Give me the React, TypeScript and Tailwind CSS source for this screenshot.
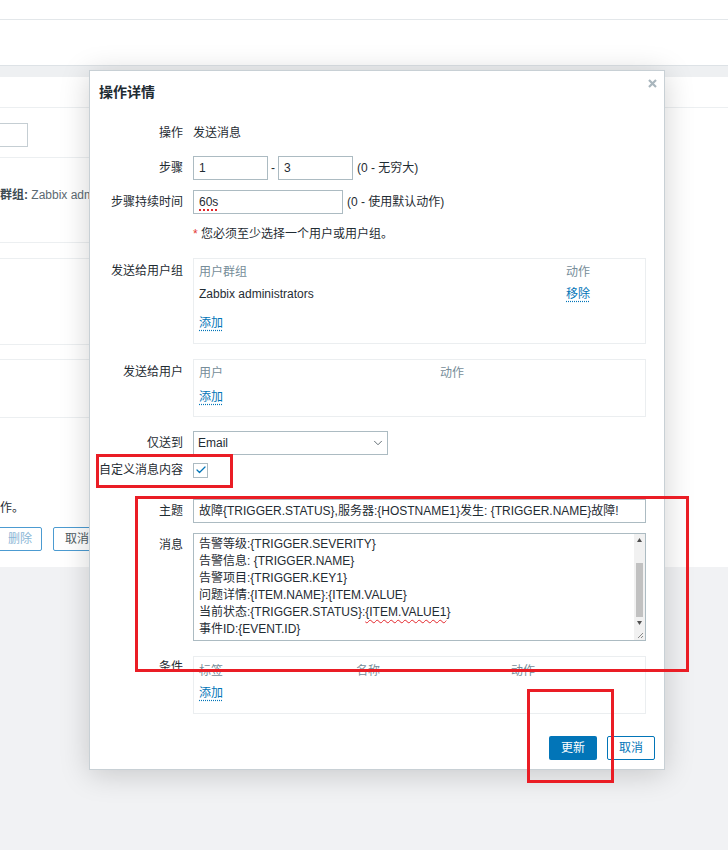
import React from "react";
import { Check, ChevronDown } from "lucide-react";

const font = "font-['Liberation_Sans','Noto_Sans_CJK_SC',sans-serif]";

const messageLines = [
	"告警等级:{TRIGGER.SEVERITY}",
	"告警信息: {TRIGGER.NAME}",
	"告警项目:{TRIGGER.KEY1}",
	"问题详情:{ITEM.NAME}:{ITEM.VALUE}",
	null,
	"事件ID:{EVENT.ID}",
];

const Label = ({ children, className = "" }: { children: React.ReactNode; className?: string }) => (
	<div className={`w-[84px] shrink-0 text-right leading-[24px] whitespace-nowrap ${className}`}>{children}</div>
);

const Link = ({ children }: { children: React.ReactNode }) => (
	<span className="text-[#0275b8] underline decoration-dotted decoration-[#0275b8] underline-offset-[3px]">
		{children}
	</span>
);

const Input = ({ className = "", children }: { className?: string; children?: React.ReactNode }) => (
	<div className={`h-[24px] border border-[#acbbc2] bg-white px-[5px] leading-[22px] whitespace-nowrap ${className}`}>
		{children}
	</div>
);

const Annotation = ({ className }: { className: string }) => (
	<div className={`pointer-events-none absolute border-[3px] border-[#ea1d25] ${className}`} />
);

const BackgroundPage = () => (
	<div className="bg-white">
		<div className="h-[20px] border-b border-[#e3e7ea]" />
		<div className="h-[45px]" />
		<div className="h-[12px] border-t border-[#dde2e6] bg-[#eef0f2]" />
		<div className="h-[31px] border-b border-[#eceff1]" />
		<div className="w-[640px]">
			<div className="h-[50px] border-b border-[#eceff1] pt-[15px]">
				<div className="-ml-[100px] h-[24px] w-[128px] border border-[#c5ced3]" />
			</div>
			<div className="h-[85px] border-b border-[#eceff1] pt-[30px] leading-[14px] whitespace-nowrap">
				<span className="font-bold text-[#3d4a51]">群组:</span>
				<span className="text-[#5c6a72]"> Zabbix administrators 通过 所有介质</span>
			</div>
			<div className="h-[16px] border-b border-[#eceff1]" />
			<div className="h-[86px] border-b border-[#eceff1]" />
			<div className="h-[15px] border-b border-[#eceff1]" />
			<div className="h-[58px] border-b border-[#eceff1]" />
			<div className="h-[149px] pt-[83px]">
				<div className="leading-[14px] text-[#1f2c33]">作。</div>
				<div className="mt-[12px] flex gap-[11px]">
					<div className="-ml-[12px] h-[24px] w-[54px] rounded-[2px] border border-[#4c9bd1] pl-[19px] leading-[22px] text-[#8ab6d6]">
						删除
					</div>
					<div className="h-[24px] w-[48px] rounded-[2px] border border-[#4c9bd1] text-center leading-[22px] text-[#4d5a61]">
						取消
					</div>
				</div>
			</div>
		</div>
	</div>
);

const Dialog = () => (
	<div className="absolute left-[89px] top-[70px] w-[576px] border border-[#c8d0d5] bg-white pb-[9px] pl-[9px] text-[#1f2c33] shadow-[0_4px_28px_rgba(0,0,0,0.18)]">
		<div className="pt-[13px] text-[14px] font-bold leading-[17px] text-[#1f2c33]">操作详情</div>
		<svg className="absolute right-[7px] top-[8px]" width="9" height="9" viewBox="0 0 9 9">
			<path d="M1 1 L8 8 M8 1 L1 8" stroke="#a9b6bd" strokeWidth="2.2" />
		</svg>

		<div className="mt-[20px] flex">
			<Label>操作</Label>
			<div className="ml-[10px] leading-[24px]">发送消息</div>
		</div>

		<div className="mt-[11px] flex">
			<Label>步骤</Label>
			<div className="ml-[10px] flex items-center">
				<Input className="w-[75px]">1</Input>
				<span className="mx-[3px]">-</span>
				<Input className="w-[75px]">3</Input>
				<span className="ml-[4px]">(0 - 无穷大)</span>
			</div>
		</div>

		<div className="mt-[10px] flex">
			<Label>步骤持续时间</Label>
			<div className="ml-[10px] flex items-center">
				<Input className="w-[150px] border-[#0275b8]">
					<span className="underline decoration-dotted decoration-[#e3262b] decoration-2 underline-offset-[3px]">60s</span>
				</Input>
				<span className="ml-[4px]">(0 - 使用默认动作)</span>
			</div>
		</div>

		<div className="mt-[13px] pl-[94px] leading-[14px]">
			<span className="text-[#e33734]">*</span> 您必须至少选择一个用户或用户组。
		</div>

		<div className="mt-[17px] flex">
			<Label className="pt-[1px]">发送给用户组</Label>
			<div className="ml-[10px] h-[86px] w-[453px] border border-[#ebeef0] pl-[5px] pt-[6px] leading-[14px]">
				<div className="flex text-[#768d99]">
					<div className="w-[367px]">用户群组</div>
					<div>动作</div>
				</div>
				<div className="mt-[8px] flex">
					<div className="w-[367px]">Zabbix administrators</div>
					<Link>移除</Link>
				</div>
				<div className="mt-[15px]">
					<Link>添加</Link>
				</div>
			</div>
		</div>

		<div className="mt-[15px] flex">
			<Label className="pt-[1px]">发送给用户</Label>
			<div className="ml-[10px] h-[58px] w-[453px] border border-[#ebeef0] pl-[5px] pt-[6px] leading-[14px]">
				<div className="flex text-[#768d99]">
					<div className="w-[241px]">用户</div>
					<div>动作</div>
				</div>
				<div className="mt-[10px]">
					<Link>添加</Link>
				</div>
			</div>
		</div>

		<div className="mt-[14px] flex">
			<Label>仅送到</Label>
			<div className="ml-[10px] flex h-[24px] w-[195px] items-center justify-between border border-[#acbbc2] pl-[4px] pr-[2px]">
				<span>Email</span>
				<ChevronDown size={14} strokeWidth={1.5} color="#4f5b62" />
			</div>
		</div>

		<div className="mt-[3px] flex">
			<Label>自定义消息内容</Label>
			<div className="ml-[10px] flex items-center">
				<div className="flex h-[15px] w-[15px] items-center justify-center border border-[#acbbc2]">
					<Check size={12} strokeWidth={2.5} color="#0275b8" />
				</div>
			</div>
		</div>

		<div className="mt-[17px] flex">
			<Label>主题</Label>
			<Input className="ml-[10px] w-[453px]">故障{"{TRIGGER.STATUS}"},服务器:{"{HOSTNAME1}"}发生: {"{TRIGGER.NAME}"}故障!</Input>
		</div>

		<div className="mt-[10px] flex">
			<Label>消息</Label>
			<div className="relative ml-[10px] h-[108px] w-[453px] overflow-hidden border border-[#acbbc2] pl-[5px] pt-[2px] leading-[17px]">
				{messageLines.map((line, i) =>
					line ? (
						<div key={i}>{line}</div>
					) : (
						<div key={i}>
							当前状态:{"{TRIGGER.STATUS}"}:
							<span className="underline decoration-wavy decoration-[#e3262b] decoration-1 underline-offset-[3px]">
								{"{ITEM.VALUE1"}
							</span>
							{"}"}
						</div>
					)
				)}
				<div className="absolute right-0 top-0 h-[95px] w-[11px] bg-[#f1f1f1]">
					<svg className="absolute left-[3px] top-[4px]" width="5" height="4" viewBox="0 0 5 4">
						<path d="M2.5 0 L5 4 L0 4 Z" fill="#505050" />
					</svg>
					<div className="absolute left-[2px] top-[29px] h-[54px] w-[7px] bg-[#c1c1c1]" />
					<svg className="absolute bottom-[4px] left-[3px]" width="5" height="4" viewBox="0 0 5 4">
						<path d="M0 0 L5 0 L2.5 4 Z" fill="#505050" />
					</svg>
				</div>
				<div className="absolute bottom-0 right-0 h-[11px] w-[11px] bg-[#f1f1f1]">
					<svg width="11" height="11" viewBox="0 0 11 11">
						<path d="M9 4 L4 9 M9 7 L7 9" stroke="#8a8a8a" strokeWidth="1" />
					</svg>
				</div>
			</div>
		</div>

		<div className="mt-[15px] flex">
			<Label className="-mt-[1px]">条件</Label>
			<div className="ml-[10px] h-[58px] w-[453px] border border-[#ebeef0] pl-[5px] pt-[7px] leading-[14px]">
				<div className="flex text-[#768d99]">
					<div className="w-[157px]">标签</div>
					<div className="w-[155px]">名称</div>
					<div>动作</div>
				</div>
				<div className="mt-[8px]">
					<Link>添加</Link>
				</div>
			</div>
		</div>

		<div className="mt-[22px] flex justify-end gap-[10px] pr-[9px]">
			<div className="h-[24px] w-[48px] rounded-[2px] bg-[#0275b8] text-center leading-[24px] text-white">更新</div>
			<div className="h-[24px] w-[48px] rounded-[2px] border border-[#0275b8] text-center leading-[22px] text-[#0275b8]">
				取消
			</div>
		</div>
	</div>
);

export default function App() {
	return (
		<div className={`relative h-[850px] w-[728px] overflow-hidden bg-[#f1f2f4] text-[12px] ${font}`}>
			<BackgroundPage />
			<Dialog />
			<Annotation className="left-[96px] top-[454px] h-[34px] w-[137px]" />
			<Annotation className="left-[135px] top-[496px] h-[176px] w-[554px]" />
			<Annotation className="left-[527px] top-[689px] h-[94px] w-[87px]" />
		</div>
	);
}
